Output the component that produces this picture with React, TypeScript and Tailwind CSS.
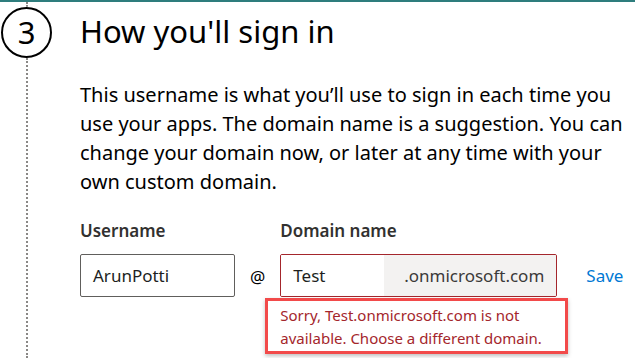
export default function App() {
  return (
    <div
      className="w-[635px] h-[358px] overflow-hidden bg-white border-t-2 border-[#2e7d7d] flex text-[#201f1e]"
      style={{ fontFamily: '"Noto Sans", "Open Sans", sans-serif' }}
    >
      {/* step marker */}
      <div className="w-[53px] flex flex-col items-center shrink-0">
        <div className="h-[5px] border-l-2 border-dotted border-[#8a8886]" />
        <div className="w-[51px] h-[51px] rounded-full border-2 border-black flex items-center justify-center text-[31px] leading-none text-black">
          3
        </div>
        <div className="flex-1 border-l-2 border-dotted border-[#8a8886]" />
      </div>

      <div className="ml-[27px] flex flex-col">
        <h1 className="text-[31px] leading-[38px] mt-[10px] text-black font-normal">How you'll sign in</h1>

        <p className="mt-[30px] text-[20px] leading-[29px] w-[555px] text-black">
          This username is what you’ll use to sign in each time you use your apps. The domain name is a suggestion. You can change your domain now, or later at any time with your own custom domain.
        </p>

        <div className="mt-[24px] flex items-start">
          <div className="flex flex-col w-[155px]">
            <label className="text-[17px] font-semibold leading-[22px] text-[#323130]">Username</label>
            <div className="mt-[12px] w-[155px] h-[43px] border border-[#605e5c] rounded-[2px] flex items-center px-[12px] text-[17px]">
              ArunPotti
            </div>
          </div>

          <span className="mt-[44px] mx-[15px] text-[17px] text-black">@</span>

          <div className="flex flex-col w-[277px]">
            <label className="text-[17px] font-semibold leading-[22px] text-[#323130]">Domain name</label>
            <div className="mt-[12px] w-[277px] h-[43px] border border-[#a4262c] rounded-[2px] flex overflow-hidden text-[17px]">
              <div className="w-[103px] flex items-center px-[12px] bg-white">Test</div>
              <div className="flex-1 bg-[#f3f2f1] flex items-center justify-end pr-[12px] text-[#3b3a39]">
                .onmicrosoft.com
              </div>
            </div>
            <div className="-ml-[15px] mt-[1px] w-[303px] shrink-0 h-[56px] border-[3px] border-[#f24a4a] shadow-[0_2px_4px_rgba(0,0,0,0.25)] pl-[12px] pt-[3px] text-[15px] leading-[23px] text-[#a4262c]">
              Sorry, Test.onmicrosoft.com is not available. Choose a different domain.
            </div>
          </div>

          <a className="mt-[43px] ml-[29px] text-[17px] text-[#0078d4]">Save</a>
        </div>
      </div>
    </div>
  );
}
